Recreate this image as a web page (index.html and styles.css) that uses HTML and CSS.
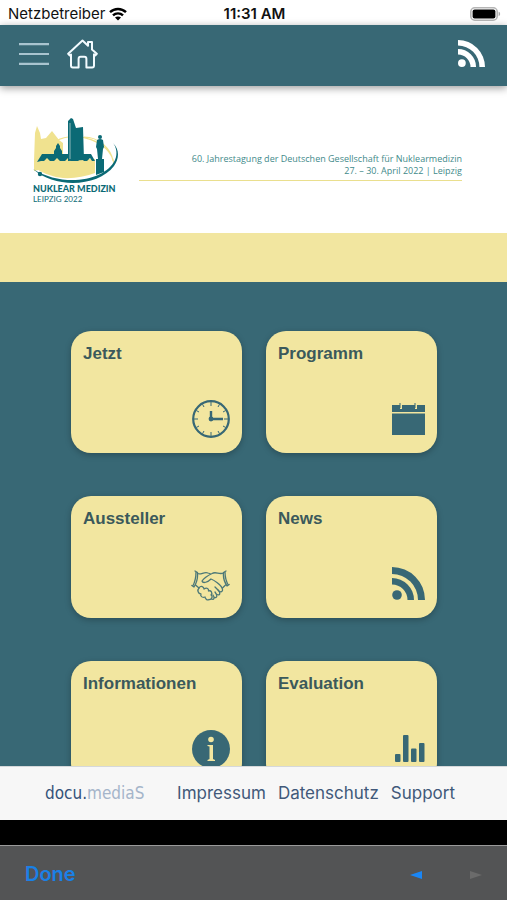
FILE: index.html
```html
<!DOCTYPE html>
<html lang="de">
<head>
  <meta charset="UTF-8" />
  <meta name="viewport" content="width=device-width, initial-scale=1" />
  <title>Nuklearmedizin Leipzig 2022</title>
  <link rel="stylesheet" href="styles.css">
</head>
<body>
  <div class="status-bar">
    <div class="carrier">
      <span>Netzbetreiber</span>
      <svg width="18" height="14" viewBox="0 0 18 14" fill="none" stroke="#000" stroke-width="2.4">
        <path d="M1 5.2C5.5 0.9 12.5 0.9 17 5.2" />
        <path d="M4 8.4C6.8 5.7 11.2 5.7 14 8.4" />
        <path d="M9 13.6L6 10.6C7.7 9.1 10.3 9.1 12 10.6Z" fill="#000" stroke="none" />
      </svg>
    </div>
    <span class="clock">11:31 AM</span>
    <svg class="battery" width="31" height="14" viewBox="0 0 31 14">
      <rect x="0.8" y="0.8" width="26.4" height="12.4" rx="4" fill="#fff" stroke="#b5b5b5" stroke-width="1.6" />
      <rect x="2.6" y="2.4" width="22.8" height="9.2" rx="2" fill="#000" />
      <path d="M28.6 4.8C30.6 5.4 30.6 8.6 28.6 9.2Z" fill="#aaa" />
    </svg>
  </div>

  <nav class="navbar">
    <button class="icon-btn" aria-label="Menü">
      <svg width="30" height="24" viewBox="0 0 30 24" stroke="#a9c4cf" stroke-width="2.2">
        <path d="M0 2.2H30M0 12H30M0 21.8H30" />
      </svg>
    </button>
    <a class="icon-btn" href="#" aria-label="Startseite">
      <svg width="31" height="30" viewBox="0 0 31 30" fill="none" stroke="#f2fbff" stroke-width="2" stroke-linejoin="round" stroke-linecap="round">
        <path d="M4 15.6L2.6 16.4L1.2 14.8L15.5 1.6L21 6.7V3H25V10.4L29.8 14.8L28.4 16.4L27 15.4V26.5Q27 28.4 25.2 28.4H19.4V20Q19.4 17.8 17.4 17.8H13.6Q11.6 17.8 11.6 20V28.4H5.8Q4 28.4 4 26.5Z" />
      </svg>
    </a>
    <a class="icon-btn nav-feed" href="#" aria-label="News">
      <svg width="27" height="27" viewBox="0 0 32 32" fill="#fff">
        <circle cx="4.6" cy="27.4" r="4.6" />
        <path d="M0 10.6A21.4 21.4 0 0 1 21.4 32H14.8A14.8 14.8 0 0 0 0 17.2Z" />
        <path d="M0 0A32 32 0 0 1 32 32H25.4A25.4 25.4 0 0 0 0 6.6Z" />
      </svg>
    </a>
  </nav>

  <header class="banner">
    <svg class="event-logo" width="94" height="92" viewBox="0 0 94 92" role="img" aria-label="Nuklear Medizin Leipzig 2022">
      <!-- old town silhouette -->
      <path d="M5 48L6 20L8 13L11 20L12 26L17 25L23 18L30 27L34 30V42H40V50L5 58Z" fill="#f0e28f" />
      <path d="M5 46H66V60Q50 66 34 65Q16 63 5 54Z" fill="#f0e28f" />
      <path d="M27 28C48 17 80 28 85 50M55 24C70 24 82 36 84 48" fill="none" stroke="#f0e28f" stroke-width="1.2" />
      <!-- skyline -->
      <g fill="#0b6a75">
        <path d="M39 48V8L42 5L44 6L47 15L54 14L55 47Z" />
        <path d="M8 49L13 41H25V38L27 35V33L29 30L31 33V35L33 38V41H62L66 48H63L61 45L58 48H55L52 45L49 48H42L39 45L36 48H31L28 45L25 48H21L18 45L15 48H12Z" />
        <circle cx="71" cy="24" r="2" />
        <path d="M68 27Q71 25 74 27L75 34L74 36L73 46H69L68 36L67 34Z" />
        <path d="M67 46H75V59L67 62Z" />
      </g>
      <path d="M41 10V46" stroke="#8fb7ba" stroke-width="1" />
      <!-- orbit -->
      <path d="M4 56C34 75 76 68 86 47C89 40 87 34 84 30C91 37 90 46 85 53C69 74 26 76 4 56Z" fill="#0b6a75" />
      <circle cx="11" cy="61" r="2.2" fill="#0b6a75" />
      <text class="logo-bold" x="4" y="79">NUKLEAR MEDIZIN</text>
      <text class="logo-light" x="4" y="89">LEIPZIG 2022</text>
    </svg>
    <p class="event-info">
      60. Jahrestagung der Deutschen Gesellschaft für Nuklearmedizin<br>
      27. – 30. April 2022 | Leipzig
    </p>
  </header>
  <div class="stripe"></div>

  <main class="content">
    <div class="tiles">
      <a class="tile" href="#">
        <span>Jetzt</span>
        <svg class="tile-icon" width="38" height="38" viewBox="0 0 38 38" fill="none" stroke="#386875">
          <circle cx="19" cy="19" r="17.8" stroke-width="2.2" />
          <path d="M19 2V6M19 32V36M2 19H6M32 19H36M10.5 4.3L12 7M26 31L27.5 33.7M4.3 10.5L7 12M31 26L33.7 27.5M27.5 4.3L26 7M12 31L10.5 33.7M33.7 10.5L31 12M7 26L4.3 27.5" stroke-width="1" />
          <path d="M19 11V19H31" stroke-width="2.4" />
          <circle cx="19" cy="19" r="2.4" fill="#386875" stroke="none" />
        </svg>
      </a>
      <a class="tile" href="#">
        <span>Programm</span>
        <svg class="tile-icon" width="33" height="38" viewBox="0 0 33 38" fill="#386875">
          <path d="M0 5H33V12H0ZM0 13.5H33V35H0Z" />
          <path d="M9 5V9M24 5V9" stroke="#f2e6a0" stroke-width="2" />
          <path d="M8 3V8M23 3V8" stroke="#386875" stroke-width="1" />
        </svg>
      </a>
      <a class="tile" href="#">
        <span>Aussteller</span>
        <svg class="tile-icon" width="39" height="38" viewBox="0 0 39 38" fill="none" stroke="#4c7877" stroke-width="1.3" stroke-linejoin="round" stroke-linecap="round">
          <path d="M4 6L6.5 7.5C7 13 5.5 18 3 22L0.8 20.5M5 6.8C5 12 4 17 1.8 21" />
          <path d="M35 6L32.5 7.5C32 12 34 18 36 21L38.2 19.5M34 6.8C34 11 35 16 37.2 20" />
          <path d="M6.8 8.5C10 10 13 6.5 17 8L20 9M32.5 8C28 10 25 6 21 8.5C18 10 13 13 11 16C12 19 17 17 20 14C23 15 30 20 31 23C33 27 29 28 27 25L24 22" />
          <path d="M4.5 20L8 23M34.5 20L31.5 23" />
          <path d="M8 23C10 20 13 22 13 24C16 22 18 24 17.5 26C20 25 22 28 20 30C22 31 21 35 18 34.5C16 36 14 33 14 32C11 33 9 31 10 29C7 29 6 25 8 23Z" />
          <path d="M20.5 34C23 35 24 33 22 30M23.5 32.5C26 33 27 31 24 27M26 29.5C29 31 30 28 27 25" />
        </svg>
      </a>
      <a class="tile" href="#">
        <span>News</span>
        <svg class="tile-icon" width="33" height="38" viewBox="0 0 33 38" fill="#386875">
          <circle cx="5" cy="30" r="4.8" />
          <path d="M0 13A22 22 0 0 1 22 35H15.5A15.5 15.5 0 0 0 0 19.5Z" />
          <path d="M0 2A33 33 0 0 1 33 35H26A26 26 0 0 0 0 9Z" />
        </svg>
      </a>
      <a class="tile" href="#">
        <span>Informationen</span>
        <svg class="tile-icon" width="38" height="38" viewBox="0 0 38 38">
          <circle cx="19" cy="19" r="19" fill="#386875" />
          <circle cx="19" cy="9.5" r="2.8" fill="#f2e6a0" />
          <path d="M15.5 15H21V29L23 30V31H15.5V30L17.5 29V16.5L15.5 16Z" fill="#f2e6a0" />
        </svg>
      </a>
      <a class="tile" href="#">
        <span>Evaluation</span>
        <svg class="tile-icon" width="31" height="38" viewBox="0 0 31 38" fill="#386875">
          <rect x="1" y="24" width="5.5" height="8" rx="1" />
          <rect x="9" y="5" width="5.5" height="27" rx="1" />
          <rect x="17" y="18.5" width="5.5" height="13.5" rx="1" />
          <rect x="25" y="13" width="5.5" height="19" rx="1" />
        </svg>
      </a>
    </div>
  </main>

  <footer class="footer">
    <a class="brand" href="#">docu.<span>mediaS</span></a>
    <a href="#">Impressum</a>
    <a href="#">Datenschutz</a>
    <a href="#">Support</a>
  </footer>
  <div class="gap-bar"></div>

  <div class="toolbar">
    <button class="done">Done</button>
    <button class="arrow" aria-label="Zurück">
      <svg width="12" height="8" viewBox="0 0 12 8"><path d="M12 0V8L0 4Z" fill="#1a86f5" /></svg>
    </button>
    <button class="arrow" aria-label="Vor" disabled>
      <svg width="12" height="8" viewBox="0 0 12 8"><path d="M0 0V8L12 4Z" fill="#6b6b6b" /></svg>
    </button>
  </div>
</body>
</html>
```
FILE: styles.css
```css
* {
  box-sizing: border-box;
}

body {
  margin: 0;
  height: 100vh;
  display: flex;
  flex-direction: column;
  overflow: hidden;
  font-family: Inter, sans-serif;
  background: #386875;
}

a {
  color: inherit;
  text-decoration: none;
}

button {
  padding: 0;
  border: none;
  background: none;
  font-family: inherit;
  cursor: pointer;
}

svg {
  display: block;
}

.status-bar {
  flex: none;
  display: grid;
  grid-template-columns: 1fr auto 1fr;
  align-items: center;
  height: 25px;
  padding: 2px 6px 0 8px;
  background: #fff;
  color: #111;
  font-size: 15px;
}

.carrier {
  display: flex;
  align-items: center;
  gap: 4px;
}

.clock {
  font-size: 15px;
  font-weight: 600;
}

.battery {
  justify-self: end;
}

.navbar {
  flex: none;
  display: flex;
  align-items: center;
  gap: 18px;
  height: 61px;
  padding: 0 22px 4px 19px;
  background: #386875;
  box-shadow: 0 2px 8px rgba(0, 0, 0, 0.4);
  z-index: 1;
}

.nav-feed {
  margin-left: auto;
}

.banner {
  flex: none;
  display: flex;
  justify-content: space-between;
  gap: 16px;
  height: 147px;
  padding: 27px 45px 0 29px;
  background: #fff;
}

.event-logo {
  flex: none;
}

.logo-bold,
.logo-light {
  font-family: Lato, sans-serif;
  fill: #0b6a75;
}

.logo-bold {
  font-size: 9px;
  font-weight: 900;
}

.logo-light {
  font-size: 8px;
}

.event-info {
  flex: 1;
  align-self: flex-start;
  margin: 40px 0 0;
  padding-bottom: 3px;
  border-bottom: 1px solid #eadf8e;
  color: #3f8a8a;
  font-family: "Open Sans", sans-serif;
  font-size: 9px;
  line-height: 12px;
  text-align: right;
  white-space: nowrap;
}

.stripe {
  flex: none;
  height: 49px;
  background: #f2e6a0;
}

.content {
  flex: 1;
  min-height: 0;
  padding: 49px 70px 43px 71px;
  overflow-y: auto;
  scrollbar-width: none;
}

.tiles {
  display: grid;
  grid-template-columns: 1fr 1fr;
  gap: 43px 24px;
}

.tile {
  display: flex;
  flex-direction: column;
  justify-content: space-between;
  height: 122px;
  padding: 13px 12px 15px;
  border-radius: 20px;
  background: #f2e6a0;
  box-shadow: 0 2px 6px rgba(0, 0, 0, 0.25);
  color: #3b595b;
  font-family: "Liberation Sans", sans-serif;
  font-size: 17px;
  font-weight: bold;
  line-height: 20px;
}

.tile-icon {
  align-self: flex-end;
}

.footer {
  flex: none;
  display: flex;
  align-items: center;
  gap: 12px;
  height: 54px;
  padding: 0 52px 2px 45px;
  border-top: 1px solid #d5d8da;
  background: #f7f7f7;
  color: #41597a;
  font-size: 17px;
}

.brand {
  margin-right: auto;
  color: #34527a;
  font-family: "DejaVu Sans Condensed", "DejaVu Sans", sans-serif;
  font-size: 17px;
}

.brand span {
  color: #a5b5ca;
}

.gap-bar {
  flex: none;
  height: 25px;
  background: #000;
}

.toolbar {
  flex: none;
  display: flex;
  align-items: center;
  gap: 48px;
  height: 55px;
  padding: 2px 25px 0;
  border-top: 1px solid #9a9a9a;
  background: #535455;
}

.done {
  margin-right: auto;
  color: #1a80e6;
  font-size: 20px;
  font-weight: 600;
}

.arrow {
  padding-top: 2px;
}
```
